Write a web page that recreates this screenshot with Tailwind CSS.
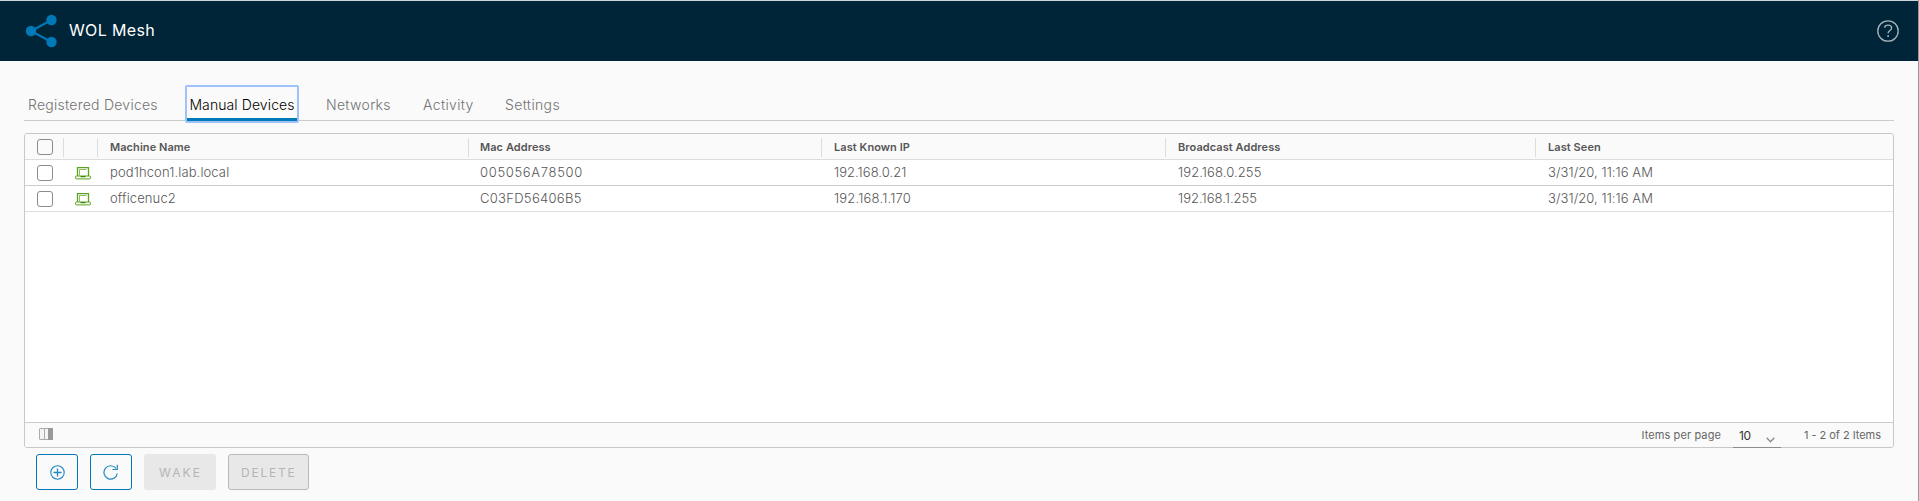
<!DOCTYPE html>
<html lang="en">
<head>
<meta charset="utf-8">
<title>WOL Mesh</title>
<script src="https://cdn.jsdelivr.net/npm/@tailwindcss/browser@4"></script>
</head>
<body class="w-[1919px] h-[501px] overflow-hidden bg-[#fafafa] border-r border-[#9a9a9a] font-['Inter','Open_Sans',sans-serif] font-light text-[#565656] whitespace-nowrap flex flex-col">

<header class="h-[61px] shrink-0 bg-[#002538] border-t border-[#cfd6da] flex items-center justify-between pl-[26px] pr-[19px]">
  <div class="flex items-center">
    <svg class="w-[32px] h-[34px]" viewBox="0 0 32 34" fill="#0079b8">
      <path d="M25.5 6 5 17l20.500 11" fill="none" stroke="#0079b8" stroke-width="2"/>
      <circle cx="25.500" cy="6" r="5.200"/><circle cx="5" cy="17" r="5.200"/><circle cx="25.500" cy="28" r="5.200"/>
    </svg>
    <h1 class="ml-[11px] -mt-[3px] text-[16px] font-normal leading-[24px] tracking-[0.35px] text-white">WOL Mesh</h1>
  </div>
  <svg class="w-[22px] h-[22px]" viewBox="0 0 22 22" fill="none" stroke="#a6b4bb">
    <circle cx="11" cy="11" r="10.200" stroke-width="1.300"/>
    <path d="M7.500 7.700C7.800 6 9.200 5.100 11 5.100c2.100 0 3.600 1.200 3.600 3 0 2.500-3.500 2.300-3.500 5.200" stroke-width="1.400"/>
    <path d="M11.100 15.300v1.800" stroke-width="1.600"/>
  </svg>
</header>

<main class="pl-[24px] pr-[24px] pt-[24px]">
  <nav class="h-[36px] border-b border-[#cccccc] flex text-[14px] leading-[39px] text-[#737373]">
    <a class="ml-[4px] w-[157px] tracking-[0.25px]">Registered Devices</a>
    <a class="relative w-[114px] h-[38px] text-center tracking-[0.1px] text-black rounded-[2px] border-2 border-[#9fc2fb] leading-[35px]">Manual Devices<span class="absolute inset-x-0 bottom-0 h-[3px] bg-[#0079b8]"></span></a>
    <a class="ml-[26px] w-[98px] pl-px tracking-[0.3px]">Networks</a>
    <a class="w-[82px] tracking-[0.35px]">Activity</a>
    <a class="tracking-[0.35px]">Settings</a>
  </nav>

  <section class="mt-[12px] h-[315px] border border-[#c8c8c8] rounded-[3px] bg-white flex flex-col overflow-hidden">
    <div class="h-[26px] shrink-0 flex bg-[#fafafa] border-b border-[#dddddd] text-[11px] font-semibold leading-[26px] tracking-[0.07px]">
      <div class="w-[38px] pl-[12px] pt-[5px] shrink-0"><div class="size-[16px] rounded-[3px] border border-[#8c8c8c] bg-[#fafafa]"></div></div>
      <div class="w-[34px] h-[19px] mt-[4px] border-l border-[#dddddd]"></div>
      <div class="w-[371px] h-[19px] mt-[4px] border-l border-[#dddddd] pl-[12px] leading-[18px]">Machine Name</div>
      <div class="w-[353px] h-[19px] mt-[4px] border-l border-[#dddddd] pl-[11px] leading-[18px]">Mac Address</div>
      <div class="w-[344px] h-[19px] mt-[4px] border-l border-[#dddddd] pl-[12px] leading-[18px]">Last Known IP</div>
      <div class="w-[370px] h-[19px] mt-[4px] border-l border-[#dddddd] pl-[12px] leading-[18px]">Broadcast Address</div>
      <div class="h-[19px] mt-[4px] border-l border-[#dddddd] pl-[12px] leading-[18px]">Last Seen</div>
    </div>
    <div class="h-[26px] shrink-0 flex border-b border-[#cccccc] text-[13px] leading-[25px]">
      <div class="w-[50px] pl-[12px] pt-[5px]"><div class="size-[16px] rounded-[3px] border border-[#8c8c8c]"></div></div>
      <svg class="w-[16px] h-[13px] mt-[7px] mr-[19px]" viewBox="0 0 16 13" fill="none" stroke="#5aa220"><path d="M2.500 9V.700h11V9" stroke-width="1.300"/><path d="M4.500 8.500V2.500h7" stroke-width=".7"/><rect x=".6" y="9" width="14.800" height="2.900" rx=".8" stroke-width="1"/><path d="M5.500 9.600h5" stroke="#3c8500" stroke-width="1.100"/></svg>
      <div class="w-[370px] tracking-[0.12px]">pod1hcon1.lab.local</div>
      <div class="w-[354px] tracking-[0.67px]">005056A78500</div>
      <div class="w-[344px] tracking-[0.04px]">192.168.0.21</div>
      <div class="w-[370px] tracking-[0.1px]">192.168.0.255</div>
      <div class="tracking-[0.06px]">3/31/20, 11:16 AM</div>
    </div>
    <div class="h-[26px] shrink-0 flex border-b border-[#dddddd] text-[13px] leading-[25px]">
      <div class="w-[50px] pl-[12px] pt-[5px]"><div class="size-[16px] rounded-[3px] border border-[#8c8c8c]"></div></div>
      <svg class="w-[16px] h-[13px] mt-[7px] mr-[19px]" viewBox="0 0 16 13" fill="none" stroke="#5aa220"><path d="M2.500 9V.700h11V9" stroke-width="1.300"/><path d="M4.500 8.500V2.500h7" stroke-width=".7"/><rect x=".6" y="9" width="14.800" height="2.900" rx=".8" stroke-width="1"/><path d="M5.500 9.600h5" stroke="#3c8500" stroke-width="1.100"/></svg>
      <div class="w-[370px] tracking-[0.12px]">officenuc2</div>
      <div class="w-[354px] tracking-[0.3px]">C03FD56406B5</div>
      <div class="w-[344px] tracking-[0.2px]">192.168.1.170</div>
      <div class="w-[370px] tracking-[0.02px]">192.168.1.255</div>
      <div class="tracking-[0.06px]">3/31/20, 11:16 AM</div>
    </div>
    <div class="grow"></div>
    <footer class="h-[25px] shrink-0 bg-[#fafafa] border-t border-[#cccccc] flex items-start text-[11px] font-normal leading-[25px] text-[#666666]">
      <svg class="w-[14px] h-[12px] mt-[5px] ml-[14px]" viewBox="0 0 14 12"><rect x=".5" y=".5" width="13" height="11" rx=".5" fill="#f4f4f4" stroke="#aaa"/><path d="M5.500 1v10" stroke="#aaa"/><path d="M9 0h5v12H9z" fill="#999"/></svg>
      <span class="ml-auto tracking-[0.1px]">Items per page</span>
      <span class="ml-[12px] w-[48px] h-[25px] pl-[6px] pr-[6px] flex justify-between text-[12px] leading-[26px] tracking-[-0.4px] text-[#333]">10
        <svg class="w-[9px] h-[6px] mt-[14px]" viewBox="0 0 9 6" fill="none" stroke="#8c8c8c" stroke-width="1.400"><path d="m.7.800 3.800 4 3.800-4"/></svg>
      </span>
      <span class="ml-[23px] mr-[12px] w-[77px] tracking-[-0.04px]">1 - 2 of 2 Items</span>
    </footer>
  </section>
  <div class="-mt-px ml-[1709px] w-[48px] h-px relative bg-[#8c8c8c]"></div>

  <div class="mt-[6px] ml-[12px] flex gap-[12px] text-[12px] font-normal text-[#b5b5b5]">
    <button class="w-[42px] h-[36px] rounded-[3px] border border-[#0079b8] flex items-center justify-center">
      <svg class="size-[15px]" viewBox="0 0 15 15" fill="none" stroke="#2588c0"><circle cx="7.500" cy="7.500" r="6.700" stroke-width="1.100"/><path d="M7.500 3.500v8M3.500 7.500h8" stroke-width="1.300"/></svg>
    </button>
    <button class="w-[42px] h-[36px] rounded-[3px] border border-[#0079b8] flex items-center justify-center">
      <svg class="size-[16px]" viewBox="0 0 16 16" fill="none" stroke="#2588c0" stroke-width="1.200"><path d="M14.300 9.500A6.700 6.700 0 1 1 13 4.400"/><path d="M14.300.700v4.800H9.500"/></svg>
    </button>
    <button class="w-[72px] h-[36px] rounded-[3px] bg-[#e8e8e8] pl-[15px] text-left leading-[37px] tracking-[2.1px]">WAKE</button>
    <button class="w-[81px] h-[36px] rounded-[3px] border border-[#b8b8b8] bg-[#e8e8e8] pl-[12px] text-left leading-[35px] tracking-[1.8px]">DELETE</button>
  </div>
</main>
</body>
</html>
